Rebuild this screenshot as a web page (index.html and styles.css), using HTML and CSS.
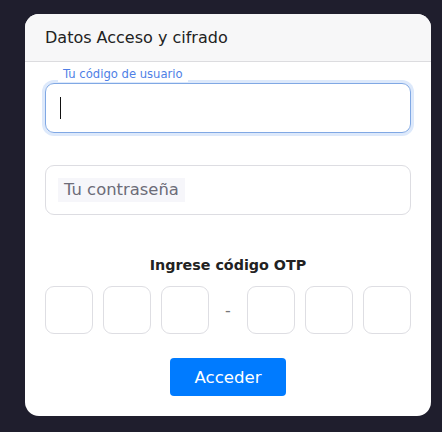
FILE: index.html
```html
<!DOCTYPE html>
<html lang="es">
<head>
<meta charset="utf-8">
<title>Datos Acceso y cifrado</title>
<link rel="stylesheet" href="styles.css">
</head>
<body>
<div class="card">
  <div class="card-header">Datos Acceso y cifrado</div>
  <div class="card-body">
    <div class="field focused">
      <label class="float-label">Tu código de usuario</label>
      <div class="input"><span class="caret"></span></div>
    </div>
    <div class="field">
      <div class="input"><span class="placeholder">Tu contraseña</span></div>
    </div>
    <div class="otp-title">Ingrese código OTP</div>
    <div class="otp-row">
      <div class="otp-box"></div>
      <div class="otp-box"></div>
      <div class="otp-box"></div>
      <div class="otp-dash">-</div>
      <div class="otp-box"></div>
      <div class="otp-box"></div>
      <div class="otp-box"></div>
    </div>
    <div class="actions"><button class="btn">Acceder</button></div>
  </div>
</div>
</body>
</html>
```
FILE: styles.css
```css
* { box-sizing: border-box; }
html, body { margin: 0; padding: 0; }
body {
  background: #1f1e2d;
  font-family: "DejaVu Sans", "Noto Sans", sans-serif;
  width: 442px;
  height: 432px;
  padding: 14px 11px 0 25px;
}
.card {
  width: 406px;
  height: 402px;
  background: #ffffff;
  border-radius: 14px;
  overflow: hidden;
}
.card-header {
  height: 48px;
  background: #f7f7f8;
  border-bottom: 1px solid #dcdcdf;
  padding: 0 20px;
  display: flex;
  align-items: center;
  font-size: 16px;
  color: #222;
}
.card-body {
  padding: 21px 20px 20px;
  display: flex;
  flex-direction: column;
}
.field {
  position: relative;
  height: 50px;
}
.field + .field { margin-top: 32px; }
.input {
  height: 50px;
  border: 1px solid #dddde2;
  border-radius: 9px;
  display: flex;
  align-items: center;
  padding: 0 12px;
}
.focused .input {
  border-color: #80a8e4;
  box-shadow: 0 0 0 3px #dde9fb;
}
.float-label {
  position: absolute;
  left: 13px;
  top: -16px;
  padding: 0 5px;
  background: #fff;
  font-size: 11.6px;
  line-height: 15px;
  color: #4f7fe6;
}
.caret {
  width: 1px;
  height: 22px;
  background: #111;
  margin-left: 2px;
}
.placeholder {
  background: #f6f6fa;
  color: #6c6c78;
  font-size: 16.4px;
  line-height: 24px;
  padding: 0 6px;
}
.otp-title {
  margin-top: 40px;
  text-align: center;
  font-weight: 600;
  font-size: 14.3px;
  line-height: 20px;
  color: #222;
}
.otp-row {
  margin-top: 11px;
  display: flex;
  gap: 10px;
  align-items: center;
}
.otp-box {
  flex: 0 0 48px;
  height: 48px;
  border: 1px solid #dedee3;
  border-radius: 9px;
}
.otp-dash {
  flex: 0 0 18px;
  text-align: center;
  color: #777;
  font-size: 16px;
}
.actions {
  margin-top: 24px;
  display: flex;
  justify-content: center;
}
.btn {
  width: 116px;
  height: 38px;
  border: none;
  border-radius: 4px;
  background: #007bff;
  color: #fff;
  font-family: inherit;
  font-size: 16.6px;
}
```
